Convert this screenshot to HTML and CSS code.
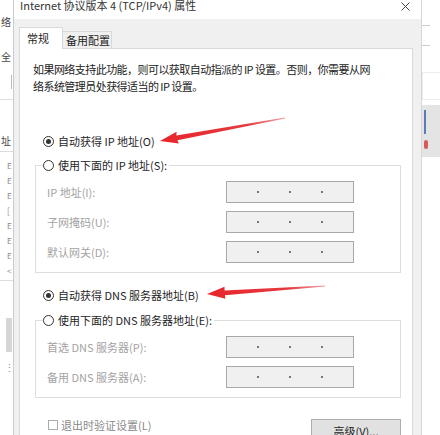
FILE: index.html
```html
<!DOCTYPE html>
<html lang="zh-CN">
<head>
    <meta charset="UTF-8">
    <title>Internet 协议版本 4 (TCP/IPv4) 属性</title>
    <link rel="stylesheet" href="styles.css">
</head>
<body>
<div class="screen">
    <!-- Window behind the dialog, left edge -->
    <div class="bg-left">
        <div class="bl-char bl-1">络</div>
        <div class="bl-char bl-2">全</div>
        <div class="bl-bar"></div>
        <div class="bl-rule"></div>
        <div class="bl-char bl-3">址</div>
        <div class="bl-rule bl-rule-2"></div>
        <div class="bl-list">
            <span>E</span><span>E</span><span>E</span><span>[</span><span>E</span><span>E</span><span>E</span><span>&lt;</span>
        </div>
        <div class="bl-rule bl-rule-3"></div>
        <div class="bl-block"></div>
        <div class="bl-dots">⋮</div>
    </div>

    <div class="dialog">
        <div class="titlebar">
            <span class="title">Internet 协议版本 4 (TCP/IPv4) 属性</span>
            <svg class="close" width="9" height="9" viewBox="0 0 9 9">
                <path d="M0.5 0.5 L8.5 8.5 M8.5 0.5 L0.5 8.5" stroke="#444" stroke-width="1" fill="none"/>
            </svg>
        </div>

        <div class="tabs">
            <div class="tab active">常规</div>
            <div class="tab">备用配置</div>
        </div>

        <div class="panel">
            <p class="intro">如果网络支持此功能，则可以获取自动指派的 IP 设置。否则，你需要从网<br>络系统管理员处获得适当的 IP 设置。</p>

            <div class="radio radio-first"><span class="dot checked"></span>自动获得 IP 地址(O)</div>

            <fieldset class="group">
                <legend><span class="radio"><span class="dot"></span>使用下面的 IP 地址(S):</span></legend>
                <div class="field"><span class="label">IP 地址(I):</span><div class="ip"><i></i><i></i><i></i></div></div>
                <div class="field"><span class="label">子网掩码(U):</span><div class="ip"><i></i><i></i><i></i></div></div>
                <div class="field"><span class="label">默认网关(D):</span><div class="ip"><i></i><i></i><i></i></div></div>
            </fieldset>

            <div class="radio radio-dns"><span class="dot checked"></span>自动获得 DNS 服务器地址(B)</div>

            <fieldset class="group group-dns">
                <legend><span class="radio"><span class="dot"></span>使用下面的 DNS 服务器地址(E):</span></legend>
                <div class="field"><span class="label">首选 DNS 服务器(P):</span><div class="ip"><i></i><i></i><i></i></div></div>
                <div class="field"><span class="label">备用 DNS 服务器(A):</span><div class="ip"><i></i><i></i><i></i></div></div>
            </fieldset>

            <div class="footer">
                <div class="check"><span class="box"></span>退出时验证设置(L)</div>
                <button class="btn">高级(V)...</button>
            </div>
        </div>
    </div>

    <!-- Window behind the dialog, right edge -->
    <div class="bg-right">
        <div class="br-tick"></div>
        <div class="br-tick br-tick-2"></div>
        <div class="br-box"></div>
        <div class="br-thumb"><span class="br-blue"></span><span class="br-red"></span></div>
    </div>

    <!-- Red annotation arrows -->
    <svg class="arrows" width="440" height="435" viewBox="0 0 440 435">
        <defs>
            <linearGradient id="fade1" x1="160" y1="141" x2="285" y2="118" gradientUnits="userSpaceOnUse">
                <stop offset="0" stop-color="#e8252b"/>
                <stop offset="0.7" stop-color="#e53a3f"/>
                <stop offset="1" stop-color="#f0a0a4"/>
            </linearGradient>
            <linearGradient id="fade2" x1="207" y1="294" x2="325" y2="286" gradientUnits="userSpaceOnUse">
                <stop offset="0" stop-color="#e8252b"/>
                <stop offset="0.7" stop-color="#e53a3f"/>
                <stop offset="1" stop-color="#f0a0a4"/>
            </linearGradient>
        </defs>
        <polygon fill="url(#fade1)" points="160,141 176.6,131.8 176.4,135.6 284.9,117.6 285.1,118.4 177.4,140.2 178.8,143.6"/>
        <polygon fill="url(#fade2)" points="207,294 224.5,286.8 224.6,290.6 325,285.6 325,286.4 224.9,295.2 225.4,298.8"/>
    </svg>
</div>
</body>
</html>
```

FILE: styles.css
```css
* {
    margin: 0;
    padding: 0;
    box-sizing: border-box;
}

body {
    font-family: "Noto Sans CJK SC", "Noto Sans", sans-serif;
    font-size: 11px;
    color: #1e1e1e;
    background: #fff;
    width: 440px;
    height: 435px;
    overflow: hidden;
}

.screen {
    position: relative;
    display: flex;
    height: 435px;
}

/* Background window, left */
.bg-left {
    width: 13px;
    flex: none;
    overflow: hidden;
    background: #fff;
    color: #444;
}

.bl-char {
    height: 12px;
    line-height: 12px;
    margin-left: 1px;
    font-size: 10px;
}

.bl-1 { margin-top: 16px; }
.bl-2 { margin-top: 23px; }
.bl-3 { margin-top: 35px; }

.bl-bar {
    width: 1px;
    height: 14px;
    margin: 12px 0 0 11px;
    background: #bbb;
}

.bl-rule {
    height: 1px;
    margin-top: 10px;
    background: #ddd;
}

.bl-rule-2 { margin-top: 4px; }
.bl-rule-3 { margin-top: 2px; }

.bl-list {
    display: flex;
    flex-direction: column;
    padding: 6px 0 0 7px;
    font-size: 8px;
    color: #888;
}

.bl-list span {
    height: 15px;
    line-height: 15px;
}

.bl-block {
    width: 6px;
    height: 34px;
    margin: 37px 0 0 6px;
    background: #d6d6d6;
}

.bl-dots {
    margin: 8px 0 0 4px;
    line-height: 14px;
    color: #999;
}

/* Dialog */
.dialog {
    width: 409px;
    flex: none;
    height: 435px;
    overflow: hidden;
    background: #f0f0f0;
    border-left: 1px solid #cbcbcb;
    border-right: 1px solid #d6d6d6;
}

.titlebar {
    height: 19px;
    background: #fff;
    display: flex;
    justify-content: space-between;
    align-items: flex-start;
    padding: 0 11px 0 6px;
}

.title {
    line-height: 14px;
    margin-top: -2px;
    color: #333;
}

.close {
    margin-top: 2px;
}

.tabs {
    display: flex;
    align-items: flex-end;
    height: 29px;
    padding-left: 5px;
}

.tab {
    width: 49px;
    height: 17px;
    line-height: 16px;
    padding-left: 3px;
    background: #f0f0f0;
    border: 1px solid #d9d9d9;
    border-left: none;
    border-bottom: none;
}

.tab.active {
    position: relative;
    z-index: 1;
    width: 44px;
    height: 22px;
    margin-bottom: -1px;
    padding: 2px 0 0 7px;
    background: #fff;
    border-left: 1px solid #d9d9d9;
}

.panel {
    margin-left: 5px;
    width: 394px;
    height: 400px;
    background: #fff;
    border: 1px solid #d9d9d9;
    padding: 12px 11px 0 13px;
}

.intro {
    line-height: 17px;
    letter-spacing: -0.55px;
    color: #222;
}

.radio {
    display: flex;
    align-items: center;
    height: 20px;
    gap: 4px;
    color: #1e1e1e;
}

.radio-first {
    margin: 36px 0 0 10px;
}

.radio-dns {
    margin: 12px 0 0 10px;
}

.dot {
    position: relative;
    width: 11px;
    height: 11px;
    border: 1px solid #333;
    border-radius: 50%;
    background: #fff;
}

.dot.checked::after {
    content: "";
    position: absolute;
    left: 2px;
    top: 2px;
    width: 5px;
    height: 5px;
    border-radius: 50%;
    background: #333;
}

.group {
    margin: 4px 0 0 2px;
    padding: 6px 10px 9px 11px;
    border: 1px solid #dedede;
}

.group-dns {
    margin-top: 5px;
}

.group legend {
    margin-left: -4px;
    padding-right: 2px;
}

.field {
    display: flex;
    align-items: center;
    height: 22px;
}

.field + .field {
    margin-top: 8px;
}

.label {
    width: 179px;
    color: #a3a3a3;
}

.ip {
    width: 128px;
    height: 22px;
    display: flex;
    justify-content: space-evenly;
    align-items: center;
    background: #f0f0f0;
    border: 1px solid #a8a8a8;
}

.ip i {
    width: 2px;
    height: 2px;
    background: #777;
}

.footer {
    display: flex;
    justify-content: space-between;
    align-items: flex-start;
    margin-top: 17px;
}

.check {
    display: flex;
    align-items: center;
    height: 20px;
    gap: 3px;
    margin-left: 15px;
    color: #8a8a8a;
}

.box {
    width: 10px;
    height: 10px;
    border: 1px solid #ababab;
    background: #fff;
}

.btn {
    width: 90px;
    height: 23px;
    margin-top: 4px;
    font-family: inherit;
    font-size: 11px;
    color: #1e1e1e;
    background: #e1e1e1;
    border: 1px solid #adadad;
}

/* Background window, right */
.bg-right {
    flex: 1;
    background: #fff;
}

.br-tick {
    width: 8px;
    height: 1px;
    margin-top: 25px;
    background: #ccc;
}

.br-tick-2 {
    margin-top: 19px;
}

.br-box {
    height: 28px;
    margin-top: 26px;
    border: 1px solid #ececec;
    border-right: none;
}

.br-thumb {
    display: flex;
    flex-direction: column;
    height: 52px;
    margin-top: 5px;
    padding: 5px 0 0 2px;
    background: #e4e4e4;
}

.br-blue {
    width: 2px;
    height: 24px;
    background: #5a7bbf;
}

.br-red {
    width: 4px;
    height: 9px;
    margin-top: 6px;
    background: #d45a5a;
    border-radius: 2px;
}

/* Annotation overlay */
.arrows {
    position: absolute;
    left: 0;
    top: 0;
    pointer-events: none;
}
```
